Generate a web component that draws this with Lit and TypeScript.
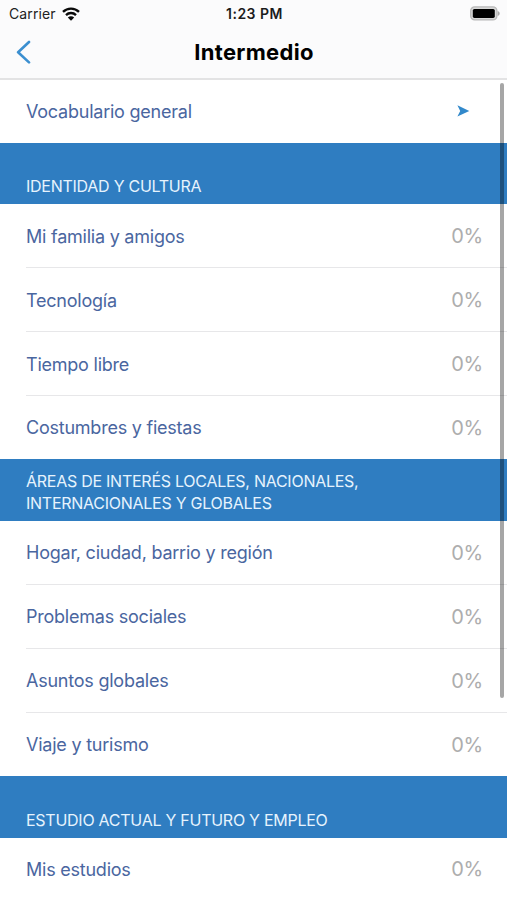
import { LitElement, html, css } from "lit";
import { customElement, property } from "lit/decorators.js";

const sections = [
  {
    title: "Identidad y cultura",
    topics: ["Mi familia y amigos", "Tecnología", "Tiempo libre", "Costumbres y fiestas"],
  },
  {
    title: "Áreas de interés locales, nacionales, internacionales y globales",
    topics: ["Hogar, ciudad, barrio y región", "Problemas sociales", "Asuntos globales", "Viaje y turismo"],
  },
  { title: "Estudio actual y futuro y empleo", topics: ["Mis estudios"] },
];

@customElement("status-bar")
class StatusBar extends LitElement {
  static styles = css`
    :host {
      display: grid;
      grid-template-columns: 1fr auto 1fr;
      align-items: center;
      height: 27px;
      padding: 0 7px 0 9px;
      box-sizing: border-box;
      font-size: 14px;
      color: #222;
    }
    .carrier { display: flex; align-items: center; gap: 6px; letter-spacing: 0.12px; }
    .time { font-weight: 600; font-size: 14px; letter-spacing: 0.5px; color: #1c1c1c; }
    .battery { justify-self: end; }
    svg { display: block; }
  `;
  render() {
    return html`
      <div class="carrier">
        <span>Carrier</span>
        <svg width="18" height="14" viewBox="0 0 18 14" fill="none" stroke="#0a0a0a" stroke-width="2.3">
          <path d="M1 4.9C5.4 .4 12.6 .4 17 4.9" />
          <path d="M4 8.1C6.8 5.3 11.2 5.3 14 8.1" />
          <path d="M9 13.7 5.8 10.5C7.6 8.8 10.4 8.8 12.2 10.5Z" fill="#0a0a0a" stroke="none" />
        </svg>
      </div>
      <div class="time">1:23 PM</div>
      <svg class="battery" width="31" height="15" viewBox="0 0 31 15">
        <rect x="1.7" y=".9" width="26.2" height="13" rx="4" fill="#d8d8d8" stroke="#b8b8b8" stroke-width="1.3" />
        <rect x="3.8" y="2.9" width="22" height="9" rx="1.6" fill="#000" />
        <path d="M28.7 5v5c1.3-.5 2-1.4 2-2.5s-.7-2-2-2.5Z" fill="#aaa" />
      </svg>
    `;
  }
}

@customElement("nav-bar")
class NavBar extends LitElement {
  @property() heading = "";
  static styles = css`
    :host {
      display: grid;
      grid-template-columns: 1fr auto 1fr;
      align-items: center;
      height: 51px;
      padding: 0 14px 2px 15px;
      box-sizing: border-box;
    }
    h1 { margin: 0; font-size: 22px; line-height: 26px; font-weight: 700; letter-spacing: 0.3px; color: #000; }
    svg { display: block; }
  `;
  render() {
    return html`
      <svg width="16" height="24" viewBox="0 0 16 24" fill="none" stroke="#3b8fd0" stroke-width="2.6" stroke-linecap="round" stroke-linejoin="round">
        <path d="M14 2 3.1 12.2 14 22.4" />
      </svg>
      <h1>${this.heading}</h1>
    `;
  }
}

@customElement("topic-row")
class TopicRow extends LitElement {
  @property() label = "";
  @property() progress = "";
  static styles = css`
    :host { display: block; height: 64px; padding-left: 26px; box-sizing: border-box; background: #fff; }
    :host(:last-child) { height: 63.4px; }
    .row {
      display: flex;
      align-items: center;
      justify-content: space-between;
      height: 100%;
      padding: 1px 24px 0 0;
      box-sizing: border-box;
      border-bottom: 1px solid #e7e7e9;
    }
    :host(:last-child) .row { border-bottom-color: transparent; }
    .label { font-size: 18px; letter-spacing: -0.23px; color: #4a669f; }
    .value { font-size: 20px; letter-spacing: -0.2px; color: #adadad; }
    .arrow { display: block; margin-right: 13px; }
  `;
  render() {
    return html`
      <div class="row">
        <span class="label">${this.label}</span>
        ${this.progress
          ? html`<span class="value">${this.progress}</span>`
          : html`<svg class="arrow" width="13" height="12" viewBox="0 0 13 12"><path d="M.4.3 12.3 6 .4 11.6 3.2 6Z" fill="#3289cb" /></svg>`}
      </div>
    `;
  }
}

@customElement("app-root")
class AppRoot extends LitElement {
  static styles = css`
    :host {
      display: flex;
      flex-direction: column;
      position: relative;
      height: 900px;
      overflow: hidden;
      background: #fff;
      font-family: Inter, "Liberation Sans", sans-serif;
    }
    .top { flex: none; background: #fbfbfc; border-bottom: 2px solid #e3e3e4; }
    .list { flex: 1; min-height: 0; overflow: hidden; }
    topic-row.general { height: 62.7px; }
    .section {
      display: flex;
      align-items: flex-end;
      height: 61.4px;
      padding: 0 130px 7px 26px;
      box-sizing: border-box;
      background: #2f7dc1;
      color: #e6f3fd;
      font-size: 16px;
      line-height: 22px;
      letter-spacing: -0.26px;
      text-transform: uppercase;
    }
    .scrollbar {
      position: absolute;
      top: 83px;
      right: 3px;
      width: 4px;
      height: 615px;
      border-radius: 2px;
      background: rgba(0, 0, 0, 0.35);
    }
  `;
  render() {
    return html`
      <header class="top">
        <status-bar></status-bar>
        <nav-bar heading="Intermedio"></nav-bar>
      </header>
      <main class="list">
        <div><topic-row class="general" label="Vocabulario general"></topic-row></div>
        ${sections.map(
          (s) => html`
            <div class="section"><span>${s.title}</span></div>
            <div>${s.topics.map((t) => html`<topic-row label=${t} progress="0%"></topic-row>`)}</div>
          `
        )}
      </main>
      <div class="scrollbar"></div>
    `;
  }
}
